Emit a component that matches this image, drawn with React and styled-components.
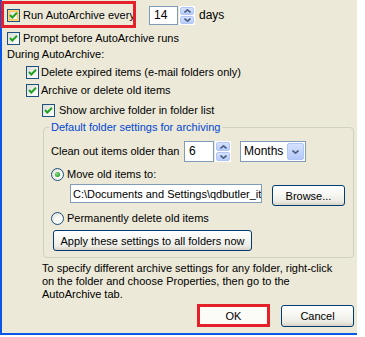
import React from "react";
import styled, { createGlobalStyle, css } from "styled-components";

const GlobalStyle = createGlobalStyle`
  html, body { margin: 0; padding: 0; background: #ffffff; }
  body { font-family: "Liberation Sans", Arial, sans-serif; font-size: 11px; color: #000; }
  * { box-sizing: border-box; }
`;

const Window = styled.div`
  width: 357px;
  height: 335px;
  background: #ece9d8;
  border-left: 2px solid #0a56e6;
  border-bottom: 2px solid #0a56e6;
  padding: 0 3px 0 5px;
  display: flex;
  flex-direction: column;
  font-size: 11px;
  line-height: 13px;
`;

const TopRow = styled.div`
  position: relative;
  margin-top: 6px;
  height: 19px;
  display: grid;
  grid-template-columns: 142px auto 1fr;
  align-items: center;
`;

const RedMark = styled.span`
  position: absolute;
  left: -6px;
  top: -5px;
  width: 135px;
  height: 27px;
  border: 3px solid #e4202b;
  pointer-events: none;
`;

const Row = styled.div`
  display: flex;
  align-items: center;
  height: ${(p) => p.$h || 16}px;
  margin-top: ${(p) => p.$mt || 0}px;
  margin-left: ${(p) => p.$ml || 0}px;
`;

const CheckLabel = styled.label`
  display: flex;
  align-items: center;
  white-space: nowrap;
`;

const Box = styled.span`
  width: 13px;
  height: 13px;
  flex: none;
  border: 1px solid #1c5180;
  background: linear-gradient(135deg, #dcdcd5 0%, #f2f2ee 60%, #ffffff 100%);
  display: flex;
  align-items: center;
  justify-content: center;
  margin-right: ${(p) => p.$gap || 3}px;
  ${(p) =>
    p.$hot &&
    css`
      box-shadow: inset 0 0 0 1px #fcd784, inset 0 0 0 2px #f9c55f;
    `}
`;

const Checkbox = ({ hot, gap }) => (
  <Box $hot={hot} $gap={gap}>
    <svg width="9" height="9" viewBox="0 0 9 9">
      <path d="M1 4 L3.3 6.5 L8 1.8" fill="none" stroke="#21a121" strokeWidth="2" />
    </svg>
  </Box>
);

const RadioCircle = styled.span`
  width: 13px;
  height: 13px;
  flex: none;
  border-radius: 50%;
  border: 1px solid #1c5180;
  background: radial-gradient(circle at 60% 65%, #ffffff 0%, #f4f4f0 45%, #d6d6ce 100%);
  display: flex;
  align-items: center;
  justify-content: center;
  margin-right: 3px;
`;

const Dot = styled.span`
  width: 5px;
  height: 5px;
  border-radius: 50%;
  background: radial-gradient(circle at 40% 40%, #8ee08e 0%, #21a121 70%);
`;

const Radio = ({ checked }) => <RadioCircle>{checked && <Dot />}</RadioCircle>;

const SpinField = styled.div`
  display: flex;
  align-items: stretch;
  height: ${(p) => p.$h}px;
`;

const NumBox = styled.div`
  width: ${(p) => p.$w}px;
  background: #fff;
  border: 1px solid #7f9db9;
  padding-left: 4px;
  display: flex;
  align-items: center;
  font-size: 12px;
`;

const SpinCol = styled.div`
  width: 16px;
  margin-left: 1px;
  background: #fff;
  padding: 1px;
  display: flex;
  flex-direction: column;
  gap: 1px;
`;

const SpinHalf = styled.div`
  flex: 1;
  border-radius: 2px;
  background: linear-gradient(180deg, #d6e2fd 0%, #b9cdfa 100%);
  border: 1px solid #b0c6f6;
  display: flex;
  align-items: center;
  justify-content: center;
`;

const Chevron = ({ down }) => (
  <svg width="7" height="4" viewBox="0 0 7 4">
    <path
      d={down ? "M0.5 0.5 L3.5 3.2 L6.5 0.5" : "M0.5 3.5 L3.5 0.8 L6.5 3.5"}
      fill="none"
      stroke="#4d6185"
      strokeWidth="1.6"
    />
  </svg>
);

const Spinner = ({ value, w, h }) => (
  <SpinField $h={h}>
    <NumBox $w={w}>{value}</NumBox>
    <SpinCol>
      <SpinHalf>
        <Chevron />
      </SpinHalf>
      <SpinHalf>
        <Chevron down />
      </SpinHalf>
    </SpinCol>
  </SpinField>
);

const Unit = styled.span`
  margin-left: 4px;
  font-size: 12px;
`;

const Group = styled.fieldset`
  margin: 3px 0 0 36px;
  width: 311px;
  border: 1px solid #d0d0bf;
  border-radius: 4px;
  padding: 0 7px 6px 7px;
  min-width: 0;
`;

const Legend = styled.legend`
  color: #0046d5;
  padding: 0 2px;
  margin-left: -2px;
  line-height: 13px;
`;

const CleanLabel = styled.span`
  width: 133px;
  white-space: nowrap;
`;

const Select = styled.div`
  margin-left: 9px;
  width: 66px;
  height: 21px;
  border: 1px solid #7f9db9;
  background: #fff;
  display: flex;
  align-items: stretch;
  font-size: 12px;
`;

const SelectText = styled.span`
  flex: 1;
  padding-left: 3px;
  display: flex;
  align-items: center;
`;

const DropBtn = styled.span`
  width: 17px;
  margin: 1px;
  border-radius: 2px;
  background: linear-gradient(180deg, #d6e2fd 0%, #b4c9f8 100%);
  border: 1px solid #b0c6f6;
  display: flex;
  align-items: center;
  justify-content: center;
`;

const PathRow = styled.div`
  display: flex;
  align-items: flex-start;
  margin-top: 2px;
  margin-left: 19px;
  height: 22px;
`;

const PathInput = styled.input`
  width: 192px;
  height: 19px;
  border: 1px solid #7f9db9;
  background: #fff;
  font-family: "Liberation Sans", Arial, sans-serif;
  font-size: 11px;
  padding: 0 0 0 2px;
  margin: 0;
  outline: none;
  color: #000;
`;

const Button = styled.button`
  width: ${(p) => p.$w}px;
  height: ${(p) => p.$h || 21}px;
  margin: ${(p) => p.$m || 0};
  border: 1px solid #003c74;
  border-radius: 3px;
  background: linear-gradient(180deg, #ffffff 0%, #f6f6f2 45%, #ecebe4 80%, #d8d2c6 100%);
  font-family: "Liberation Sans", Arial, sans-serif;
  font-size: 11px;
  color: #000;
  padding: 0;
  display: flex;
  align-items: center;
  justify-content: center;
  ${(p) =>
    p.$flagged &&
    css`
      border: 3px solid #e4202b;
      border-radius: 0;
      background: #fbfbf8;
    `}
`;

const Note = styled.p`
  margin: 4px 0 0 35px;
  line-height: 13px;
  white-space: nowrap;
`;

const Actions = styled.div`
  margin-top: 3px;
  display: flex;
  justify-content: flex-end;
  align-items: center;
  gap: 11px;
`;

export default function App() {
  return (
    <>
      <GlobalStyle />
      <Window>
        <TopRow>
          <RedMark />
          <CheckLabel>
            <Checkbox hot />
            Run AutoArchive every
          </CheckLabel>
          <Spinner value="14" w={29} h={19} />
          <Unit>days</Unit>
        </TopRow>
        <Row $mt={5}>
          <CheckLabel>
            <Checkbox />
            Prompt before AutoArchive runs
          </CheckLabel>
        </Row>
        <Row>During AutoArchive:</Row>
        <Row $mt={2} $ml={19}>
          <CheckLabel>
            <Checkbox gap={2} />
            Delete expired items (e-mail folders only)
          </CheckLabel>
        </Row>
        <Row $mt={2} $ml={19}>
          <CheckLabel>
            <Checkbox gap={2} />
            Archive or delete old items
          </CheckLabel>
        </Row>
        <Row $mt={4} $ml={35}>
          <CheckLabel>
            <Checkbox gap={4} />
            Show archive folder in folder list
          </CheckLabel>
        </Row>
        <Group>
          <Legend>Default folder settings for archiving</Legend>
          <Row $mt={7} $h={21}>
            <CleanLabel>Clean out items older than</CleanLabel>
            <Spinner value="6" w={30} h={21} />
            <Select>
              <SelectText>Months</SelectText>
              <DropBtn>
                <Chevron down />
              </DropBtn>
            </Select>
          </Row>
          <Row $mt={4}>
            <CheckLabel>
              <Radio checked />
              Move old items to:
            </CheckLabel>
          </Row>
          <PathRow>
            <PathInput readOnly defaultValue="C:\Documents and Settings\qdbutler_it\Local Settings" />
            <Button $w={73} $m="1px 0 0 10px">
              Browse...
            </Button>
          </PathRow>
          <Row $mt={4}>
            <CheckLabel>
              <Radio />
              Permanently delete old items
            </CheckLabel>
          </Row>
          <Button $w={199} $m="4px 0 0 2px">
            Apply these settings to all folders now
          </Button>
        </Group>
        <Note>
          To specify different archive settings for any folder, right-click
          <br />
          on the folder and choose Properties, then go to the
          <br />
          AutoArchive tab.
        </Note>
        <Actions>
          <Button $w={73} $h={23} $flagged>
            OK
          </Button>
          <Button $w={73} $h={22}>
            Cancel
          </Button>
        </Actions>
      </Window>
    </>
  );
}
